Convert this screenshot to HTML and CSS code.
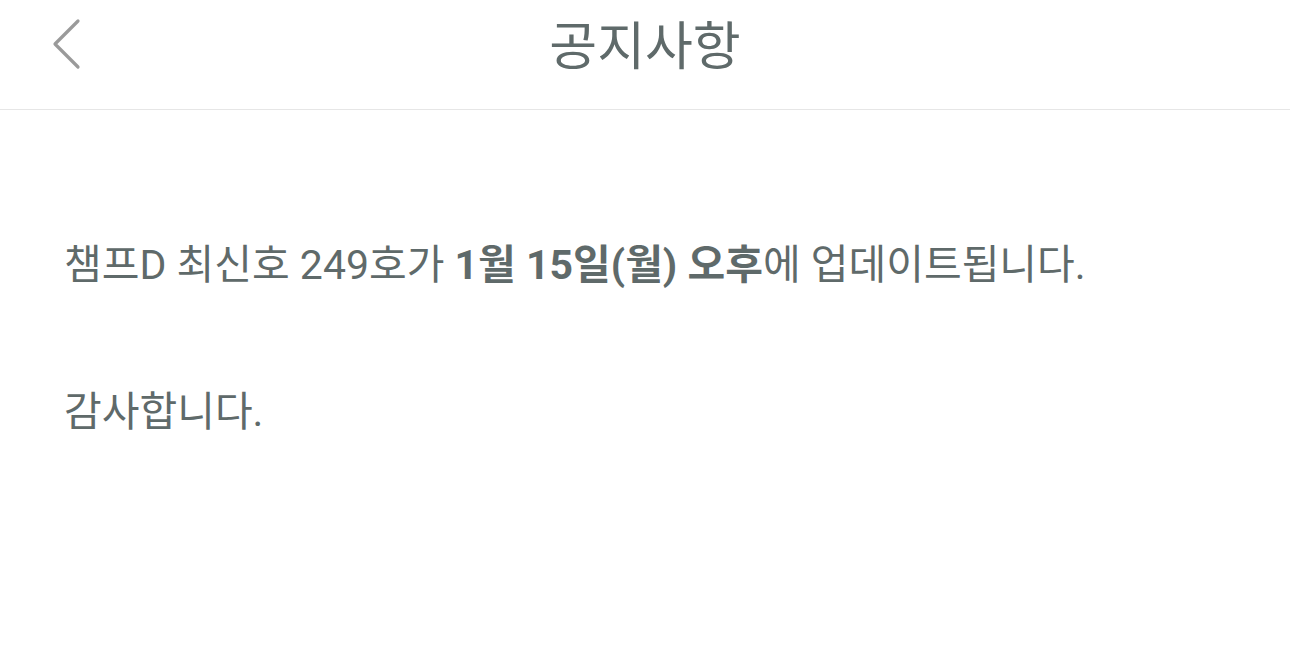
FILE: index.html
```html
<!DOCTYPE html>
<html lang="ko">
<head>
<meta charset="utf-8">
<link rel="stylesheet" href="styles.css">
</head>
<body>
<header class="topbar">
  <button class="back" aria-label="뒤로">
    <svg width="34" height="54" viewBox="0 0 34 54"><polyline points="28,4 5,27 28,50" fill="none" stroke="#9a9a9a" stroke-width="3.2" stroke-linecap="round" stroke-linejoin="round"/></svg>
  </button>
  <h1 class="title">공지사항</h1>
</header>
<main class="content">
  <p class="line">챔프D 최신호 249호가 <b>1월 15일(월) 오후</b>에 업데이트됩니다.</p>
  <p class="line">감사합니다.</p>
</main>
</body>
</html>
```
FILE: styles.css
```css
html, body { margin: 0; padding: 0; background: #fff; }
body { font-family: Roboto, "Noto Sans CJK KR", sans-serif; color: #5f6a6a; width: 1290px; height: 665px; overflow: hidden; }
.topbar { height: 109px; border-bottom: 1px solid #e6e6e6; display: flex; align-items: center; justify-content: center; position: relative; }
.back { position: absolute; left: 50px; top: 17px; background: none; border: 0; padding: 0; width: 34px; height: 54px; }
.back svg { display: block; }
.title { margin: 0 0 24px; font-weight: 400; font-size: 52px; color: #5f6a6a; }
.content { padding: 118px 64px 0; display: flex; flex-direction: column; gap: 73px; }
.line { margin: 0; font-size: 41px; line-height: 74px; font-weight: 400; }
.line b { font-weight: 700; }
```
